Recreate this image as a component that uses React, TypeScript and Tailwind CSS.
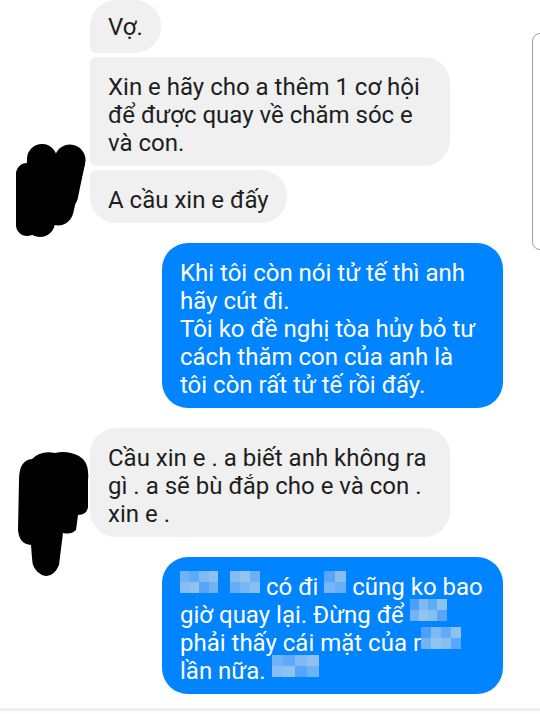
const colsA = [
  ["#6fb3f6", "#86bdf3"],
  ["#5eaaf8", "#8fc2f1"],
  ["#7fbaf4", "#55a5f9"],
  ["#8ec1f1", "#70b3f5"],
];
const colsB = [
  ["#84bdf3", "#64aef7"],
  ["#92c4f0", "#78b7f4"],
  ["#6cb1f6", "#88c0f2"],
];
const colsC = [
  ["#55a5f9", "#76b6f5"],
  ["#86bef2", "#66aff6"],
];
const colsD = [
  ["#4aa0fa", "#72b4f5"],
  ["#7ebaf3", "#93c4f0"],
  ["#62acf7", "#86bff2"],
  ["#8cc1f1", "#58a7f8"],
];

function Mosaic({ cols, w }: { cols: string[][]; w: number }) {
  const cw = w / cols.length;
  return (
    <span className="relative -top-[2px] inline-flex h-[22px] align-top">
      {cols.map((c, i) => (
        <span key={i} className="flex flex-col" style={{ width: cw }}>
          <span className="h-[11px]" style={{ background: c[0] }} />
          <span className="h-[11px]" style={{ background: c[1] }} />
        </span>
      ))}
    </span>
  );
}

const recv = "bg-[#f1f0f0] text-[#1c1e21] px-[18px] pt-[16px] pb-[9px]";
const sent = "bg-[#0084ff] text-white px-[18px] pt-[16px] pb-[9px] rounded-[26px]";

const App = () => {
  return (
    <div
      className="relative w-[540px] h-[714px] overflow-hidden bg-white flex flex-col"
      style={{ fontFamily: "Roboto, 'Noto Sans', sans-serif" }}
    >
      <div className="flex flex-col gap-[20px] text-[24px] leading-[28px] whitespace-nowrap">
        {/* nhóm tin nhắn 1 */}
        <div className="flex">
          <div className="w-[90px] shrink-0 flex items-end">
            <svg width="90" height="110" viewBox="0 135 90 110" className="-mb-[18px]">
              <g stroke="#000" strokeLinecap="round" fill="none">
                <line x1="27" y1="178" x2="27" y2="229" strokeWidth="22" />
                <line x1="42" y1="163" x2="40" y2="226" strokeWidth="30" />
                <line x1="70" y1="164" x2="58" y2="214" strokeWidth="31" />
                <line x1="73" y1="166" x2="66" y2="200" strokeWidth="24" />
              </g>
            </svg>
          </div>
          <div className="flex flex-col items-start gap-[4px]">
            <div className={`${recv} !pt-[13px] !pb-[12px] rounded-[26px] rounded-bl-[6px]`}>Vợ.</div>
            <div className={`${recv} w-[360px] rounded-r-[26px] rounded-l-[6px]`}>
              Xin e hãy cho a thêm 1 cơ hội
              <br />
              để được quay về chăm sóc e
              <br />
              và con.
            </div>
            <div className={`${recv} rounded-[26px] rounded-tl-[6px]`}>A cầu xin e đấy</div>
          </div>
        </div>

        {/* gửi 1 */}
        <div className="flex pl-[162px]">
          <div className={`${sent} w-[341px]`}>
            Khi tôi còn nói tử tế thì anh
            <br />
            hãy cút đi.
            <br />
            Tôi ko đề nghị tòa hủy bỏ tư
            <br />
            cách thăm con của anh là
            <br />
            tôi còn rất tử tế rồi đấy.
          </div>
        </div>

        {/* nhóm tin nhắn 2 */}
        <div className="flex">
          <div className="w-[90px] shrink-0 flex items-end">
            <svg width="90" height="130" viewBox="0 445 90 130" className="-mb-[40px]">
              <path
                d="M19 478 Q19 458 32 457 Q41 448 55 451 Q67 448 79 454 Q90 460 88 478 L88 505 Q87 513 78 513 L76 528 Q71 533 63 531 L59 563 Q53 577 42 573 Q32 568 32 556 L31 543 Q19 542 18 528 Z"
                fill="#000"
              />
            </svg>
          </div>
          <div className={`${recv} w-[360px] rounded-[26px]`}>
            Cầu xin e . a biết anh không ra
            <br />
            gì . a sẽ bù đắp cho e và con .
            <br />
            xin e .
          </div>
        </div>

        {/* gửi 2 */}
        <div className="flex pl-[162px]">
          <div className={`${sent} w-[341px]`}>
            <Mosaic cols={colsA} w={38} />
            <span className="inline-block w-[12px]" />
            <Mosaic cols={colsB} w={30} /> có đi <Mosaic cols={colsC} w={22} /> cũng ko bao
            <br />
            giờ quay lại. Đừng để <Mosaic cols={colsD} w={37} />
            <br />
            phải thấy cái mặt của r<Mosaic cols={colsD} w={40} />
            <br />
            lần nữa. <Mosaic cols={colsA} w={47} />
          </div>
        </div>
      </div>

      <div className="mt-[14px] flex-1 border-t-[3px] border-[#efefef] bg-[#fdfdfd]" />

      {/* thanh cuộn */}
      <div className="absolute left-[532px] top-[33px] w-[16px] h-[217px] rounded-[10px] border border-[#a0a0a0]" />
    </div>
  );
};

export default App;
